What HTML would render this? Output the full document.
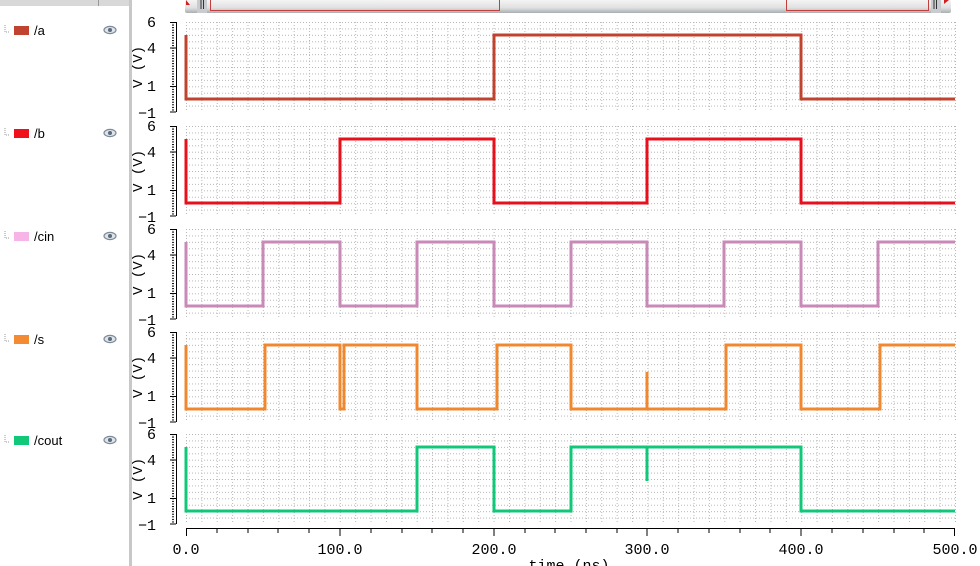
<!DOCTYPE html>
<html><head><meta charset="utf-8"><style>
html,body{margin:0;padding:0;background:#fff;width:980px;height:566px;overflow:hidden;font-family:"Liberation Sans",sans-serif}
</style></head><body>
<svg width="980" height="566" viewBox="0 0 980 566" xmlns="http://www.w3.org/2000/svg" style="display:block">
<defs>
<pattern id="gv" x="186" y="0" width="15.38" height="3" patternUnits="userSpaceOnUse"><rect x="0" y="0" width="1" height="1" fill="#b8b8b8"/></pattern>
<pattern id="gh" x="0" y="0" width="3" height="6.43" patternUnits="userSpaceOnUse"><rect x="0" y="0" width="1" height="1" fill="#b8b8b8"/></pattern>
<pattern id="rt" x="0" y="0" width="10" height="2.572" patternUnits="userSpaceOnUse"><rect x="0" y="0" width="4" height="1" fill="#000"/></pattern>
<linearGradient id="sb" x1="0" y1="0" x2="0" y2="1"><stop offset="0" stop-color="#f4f4f4"/><stop offset="0.6" stop-color="#e0e0e0"/><stop offset="1" stop-color="#a8aeb2"/></linearGradient>
<g id="eye"><ellipse cx="0" cy="0" rx="6" ry="3.6" fill="#dde3ea" stroke="#7d8a98" stroke-width="1.2"/><circle cx="0" cy="0" r="2" fill="#5d6b7a"/></g>
<g id="axis">
<rect x="186" y="0" width="770" height="90" fill="url(#gv)"/>
<rect x="186" y="0" width="770" height="90" fill="url(#gh)"/>
<line x1="176.5" y1="0" x2="176.5" y2="90" stroke="#000" stroke-width="1"/>
<rect x="172" y="0" width="4" height="90" fill="url(#rt)"/>
<line x1="170" y1="0.5" x2="176" y2="0.5" stroke="#000"/>
<line x1="170" y1="26" x2="176" y2="26" stroke="#000"/>
<line x1="170" y1="64.5" x2="176" y2="64.5" stroke="#000"/>
<line x1="170" y1="90" x2="176" y2="90" stroke="#000"/>
<g font-family="Liberation Mono, monospace" font-size="15" fill="#000">
<text x="147" y="5">6</text><text x="147" y="31">4</text><text x="147" y="69">1</text><text x="138" y="96">−1</text>
<text transform="translate(142,66) rotate(-90)" font-size="14">V (V)</text>
</g>
</g>
</defs>

<!-- left panel -->
<rect x="0" y="0" width="130" height="566" fill="#fff"/>
<rect x="0" y="0" width="130" height="6" fill="#d8d8d8"/>
<line x1="98.5" y1="0" x2="98.5" y2="6" stroke="#999"/>
<rect x="129" y="0" width="3" height="566" fill="#c8c8c8"/>
<g font-size="13" fill="#000">
<g transform="translate(0,30)"><path d="M5,-5V2H9" stroke="#999" stroke-dasharray="1,1" fill="none"/><rect x="14" y="-4" width="15" height="9" fill="#c0432f"/><text x="34" y="5">/a</text><use href="#eye" x="110" y="0"/></g>
<g transform="translate(0,133)"><path d="M5,-5V2H9" stroke="#999" stroke-dasharray="1,1" fill="none"/><rect x="14" y="-4" width="15" height="9" fill="#f0101c"/><text x="34" y="5">/b</text><use href="#eye" x="110" y="0"/></g>
<g transform="translate(0,236)"><path d="M5,-5V2H9" stroke="#999" stroke-dasharray="1,1" fill="none"/><rect x="14" y="-4" width="15" height="9" fill="#f7b4e6"/><text x="34" y="5">/cin</text><use href="#eye" x="110" y="0"/></g>
<g transform="translate(0,339)"><path d="M5,-5V2H9" stroke="#999" stroke-dasharray="1,1" fill="none"/><rect x="14" y="-4" width="15" height="9" fill="#f48a32"/><text x="34" y="5">/s</text><use href="#eye" x="110" y="0"/></g>
<g transform="translate(0,440)"><path d="M5,-5V2H9" stroke="#999" stroke-dasharray="1,1" fill="none"/><rect x="14" y="-4" width="15" height="9" fill="#10c878"/><text x="34" y="5">/cout</text><use href="#eye" x="110" y="0"/></g>
</g>

<!-- scrollbar -->
<rect x="185" y="0" width="766" height="13" fill="url(#sb)" rx="2"/>
<path d="M186,0 L190,5 L186,5Z" fill="#d02020"/>
<rect x="197" y="0" width="10" height="13" fill="#c8ccd0"/>
<line x1="201" y1="0" x2="201" y2="9" stroke="#333"/><line x1="203.5" y1="0" x2="203.5" y2="9" stroke="#333"/>
<rect x="931" y="0" width="10" height="13" fill="#c8ccd0"/>
<line x1="934" y1="0" x2="934" y2="9" stroke="#333"/><line x1="936.5" y1="0" x2="936.5" y2="9" stroke="#333"/>
<path d="M210.5,0 V10.5 H499.5 V0" fill="none" stroke="#c04040"/>
<path d="M786.5,0 V10.5 H928.5 V0" fill="none" stroke="#c04040"/>
<path d="M944,0 L949,0 L944,4Z" fill="#d02020"/>

<!-- panels -->
<g transform="translate(0,22)"><use href="#axis"/>
<path d="M186,13V77H494V13H801V77H955" fill="none" stroke="#c0432f" stroke-width="3"/></g>
<g transform="translate(0,126)"><use href="#axis"/>
<path d="M186,13V77H340V13H494V77H647V13H801V77H955" fill="none" stroke="#e8101c" stroke-width="3"/></g>
<g transform="translate(0,229)"><use href="#axis"/>
<path d="M186,13V77H263V13H340V77H417V13H494V77H571V13H647V77H724V13H801V77H878V13H955" fill="none" stroke="#c98ab8" stroke-width="3"/></g>
<g transform="translate(0,332)"><use href="#axis"/>
<path d="M186,13V77H265V13H340V77H344V13H417V77H497V13H571V77H647V40V77H726V13H801V77H880V13H955" fill="none" stroke="#f08830" stroke-width="3"/></g>
<g transform="translate(0,434)"><use href="#axis"/>
<path d="M186,13V77H417V13H494V77H571V13H647V47V13H801V77H955" fill="none" stroke="#10c878" stroke-width="3"/></g>

<!-- x axis -->
<line x1="186" y1="528.5" x2="955" y2="528.5" stroke="#000"/>
<g stroke="#000">
<line x1="186.5" y1="528" x2="186.5" y2="536"/><line x1="217" y1="528" x2="217" y2="533"/><line x1="248" y1="528" x2="248" y2="533"/><line x1="278" y1="528" x2="278" y2="533"/><line x1="309" y1="528" x2="309" y2="533"/>
<line x1="340" y1="528" x2="340" y2="536"/><line x1="371" y1="528" x2="371" y2="533"/><line x1="402" y1="528" x2="402" y2="533"/><line x1="432" y1="528" x2="432" y2="533"/><line x1="463" y1="528" x2="463" y2="533"/>
<line x1="494" y1="528" x2="494" y2="536"/><line x1="525" y1="528" x2="525" y2="533"/><line x1="555" y1="528" x2="555" y2="533"/><line x1="586" y1="528" x2="586" y2="533"/><line x1="617" y1="528" x2="617" y2="533"/>
<line x1="647" y1="528" x2="647" y2="536"/><line x1="678" y1="528" x2="678" y2="533"/><line x1="709" y1="528" x2="709" y2="533"/><line x1="740" y1="528" x2="740" y2="533"/><line x1="770" y1="528" x2="770" y2="533"/>
<line x1="801" y1="528" x2="801" y2="536"/><line x1="832" y1="528" x2="832" y2="533"/><line x1="863" y1="528" x2="863" y2="533"/><line x1="894" y1="528" x2="894" y2="533"/><line x1="924" y1="528" x2="924" y2="533"/>
<line x1="954.5" y1="528" x2="954.5" y2="536"/>
</g>
<g font-family="Liberation Mono, monospace" font-size="15" fill="#000" text-anchor="middle">
<text x="186" y="554">0.0</text><text x="340" y="554">100.0</text><text x="494" y="554">200.0</text><text x="647" y="554">300.0</text><text x="801" y="554">400.0</text><text x="955" y="554">500.0</text>
<text x="569" y="570">time (ns)</text>
</g>
</svg>
</body></html>
